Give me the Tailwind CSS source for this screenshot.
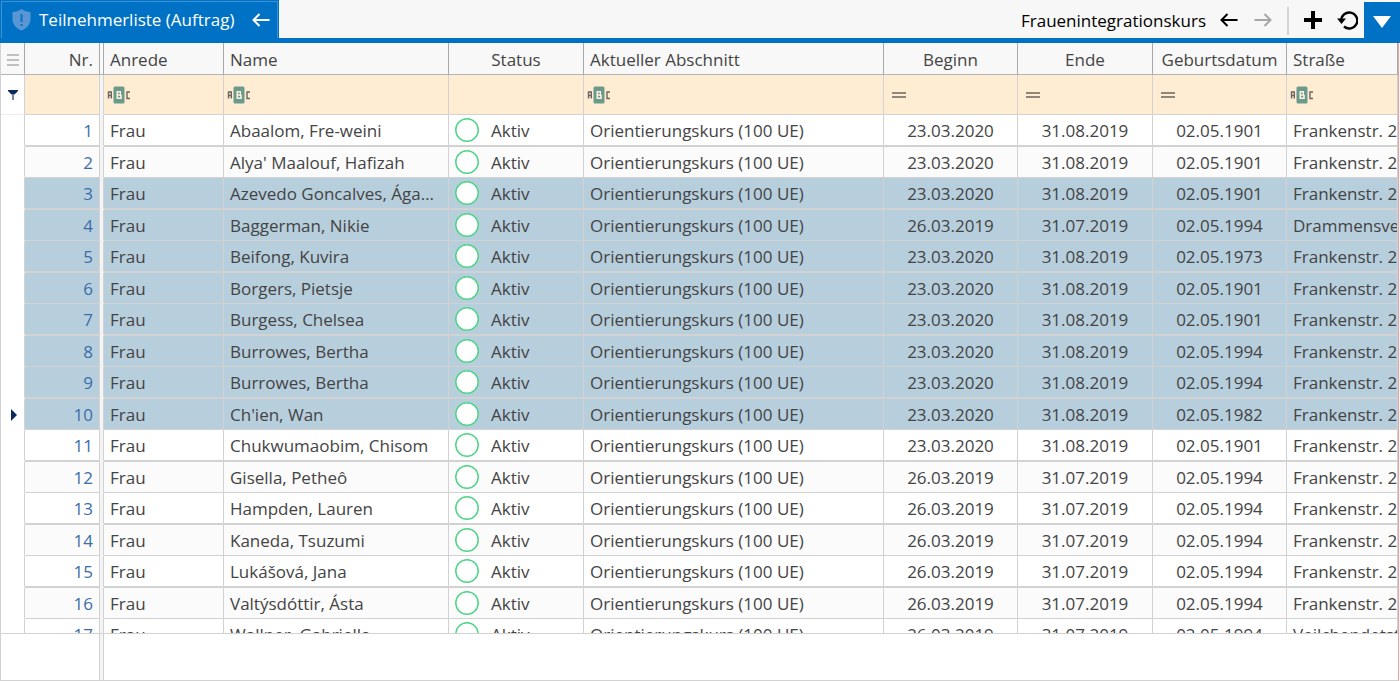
<!DOCTYPE html>
<html lang="de">

<head>
    <meta charset="UTF-8">
    <meta name="viewport" content="width=device-width, initial-scale=1.0">
    <title>Teilnehmerliste (Auftrag)</title>
    <script src="https://cdn.jsdelivr.net/npm/@tailwindcss/browser@4"></script>
</head>

<body class="h-screen flex flex-col overflow-hidden bg-white font-['Open_Sans',sans-serif] text-[17px] leading-6 text-[#444444]">
    <!-- icons used more than once -->
    <svg class="hidden">
        <symbol id="abc" viewBox="0 0 24 18">
            <rect x="6.500" y="0.500" width="11" height="17" rx="1.500" fill="#6a9a8b" />
            <path d="M1.500 12.500V6h2.800v6.500M1.500 9.500h2.800" fill="none" stroke="#6b6560" stroke-width="1.400" />
            <path fill-rule="evenodd" d="M9.500 5h4.500v3.500l.8.500V13H9.500zM11 6.500v1.700h1.700V6.500zM11 9.800v1.700h2.200V9.800z" fill="#fff3df" />
            <path d="M23 6h-3v6.500h3" fill="none" stroke="#6b6560" stroke-width="1.400" />
        </symbol>
        <symbol id="equals" viewBox="0 0 14 6">
            <path d="M0 1h14M0 5h14" stroke="#6b6560" stroke-width="1.700" />
        </symbol>
        <symbol id="arrow" viewBox="0 0 18 14">
            <path d="M17.500 7H2M7.500 1L1.500 7l6 6" fill="none" stroke="currentColor" stroke-width="2" />
        </symbol>
        <symbol id="ring" viewBox="0 0 24 24">
            <circle cx="12" cy="12" r="11.200" fill="#ffffff" stroke="#4fd587" stroke-width="1.500" />
        </symbol>
    </svg>

    <header class="flex shrink-0 h-[43px] bg-[#f7f7f7] border-b-5 border-[#0072c6]">
        <div class="flex w-[279px] bg-[#0072c6] pl-px pr-px pt-px text-white">
            <div class="flex flex-1 items-center border-x border-t border-[#3c93d5] pl-[10px] pr-[7px]">
                <svg class="w-[19px] h-[22px] shrink-0" viewBox="0 0 19 22">
                    <path d="M9.500 0C7 2 3.500 3 .5 3v7c0 5.500 4 9.500 9 11.500 5-2 9-6 9-11.500V3c-3 0-6.500-1-9-3z" fill="#5897d3" />
                    <path d="M8.500 5h2v8h-2zM8.500 15h2v2h-2z" fill="#0f6fc4" />
                </svg>
                <h1 class="ml-2 whitespace-nowrap">Teilnehmerliste (Auftrag)</h1>
                <button type="button" class="ml-auto" aria-label="Zurück">
                    <svg class="block w-[18px] h-[14px]"><use href="#arrow" /></svg>
                </button>
            </div>
        </div>
        <nav class="flex flex-1 items-center justify-end text-black">
            <span class="mt-1 mr-[14px] whitespace-nowrap">Frauenintegrationskurs</span>
            <button type="button" class="mt-[2px] mr-4" aria-label="Vorheriger">
                <svg class="block w-[18px] h-[14px]"><use href="#arrow" /></svg>
            </button>
            <button type="button" class="mt-[2px] mr-[15px] text-[#a6a6a6]" aria-label="Nächster">
                <svg class="block w-[18px] h-[14px] rotate-180"><use href="#arrow" /></svg>
            </button>
            <span class="mt-1 mr-[15px] w-[2px] h-7 bg-[#d4d4d4]"></span>
            <button type="button" class="mt-[2px] mr-[15px]" aria-label="Hinzufügen">
                <svg class="block w-[18px] h-[18px]" viewBox="0 0 18 18">
                    <path d="M9 0v18M0 9h18" stroke="currentColor" stroke-width="4" />
                </svg>
            </button>
            <button type="button" class="mt-[2px] mr-[6px]" aria-label="Aktualisieren">
                <svg class="block w-[21px] h-[19px]" viewBox="0 0 21 19">
                    <path d="M4.300 10A8 8 0 1 1 7 15.500" fill="none" stroke="currentColor" stroke-width="2.400" />
                    <path d="M0 7.500h9l-4.500 5.500z" fill="currentColor" />
                </svg>
            </button>
            <button type="button" class="flex self-stretch mt-[2px] w-9 items-center justify-center bg-[#0072c6] pt-1 text-white" aria-label="Menü">
                <svg class="w-[18px] h-3" viewBox="0 0 18 12"><path d="M0 0h18l-9 12z" fill="currentColor" /></svg>
            </button>
        </nav>
    </header>

    <main class="flex flex-1 flex-col min-h-0 mr-px border-l border-b border-[#d2d2d2] border-r-1 border-r-[#f79a9a]">
        <div class="flex-1 min-h-0 overflow-hidden">
            <table class="w-full table-fixed border-separate border-spacing-0 whitespace-nowrap">
                <colgroup>
                    <col class="w-6">
                    <col class="w-[75px]">
                    <col class="w-1">
                    <col class="w-[120px]">
                    <col class="w-[225px]">
                    <col class="w-[135px]">
                    <col class="w-[300px]">
                    <col class="w-[134px]">
                    <col class="w-[135px]">
                    <col class="w-[134px]">
                    <col>
                </colgroup>
                <thead>
                    <tr class="h-8 bg-[#f8f8f8] *:p-0 *:pt-[2px] *:font-normal *:border-b *:border-r *:border-b-[#b4b4b4] *:border-r-[#a9a9a9]">
                        <th>
                            <button type="button" class="block mx-auto" aria-label="Spalten">
                                <svg class="block w-3 h-3" viewBox="0 0 12 12"><path d="M0 1h12M0 6h12M0 11h12" stroke="#c0c0c0" stroke-width="2" /></svg>
                            </button>
                        </th>
                        <th class="text-right"><span class="pr-[6px]">Nr.</span></th>
                        <th></th>
                        <th class="text-left"><span class="pl-[6px]">Anrede</span></th>
                        <th class="text-left"><span class="pl-[6px]">Name</span></th>
                        <th>Status</th>
                        <th class="text-left"><span class="pl-[6px]">Aktueller Abschnitt</span></th>
                        <th>Beginn</th>
                        <th>Ende</th>
                        <th>Geburtsdatum</th>
                        <th class="text-left"><span class="pl-[6px]">Straße</span></th>
                    </tr>
                    <tr class="h-10 bg-[#feecd3] *:p-0 *:border-b *:border-r *:border-[#d2d2d2]">
                        <td class="bg-white border-b-[#eeeeee]!">
                            <svg class="block mx-auto w-[10px] h-[10px]" viewBox="0 0 10 10">
                                <path d="M0 0h10v1L6.500 4.500h-3L0 1z" fill="#0b2a63" />
                                <path d="M4 4h2v6H4z" fill="#7386ab" />
                            </svg>
                        </td>
                        <td></td>
                        <td class="bg-[#f4f4f4] border-b-[#f4f4f4]!"></td>
                        <td><svg class="ml-[3px] w-6 h-[18px]"><use href="#abc" /></svg></td>
                        <td><svg class="ml-[3px] w-6 h-[18px]"><use href="#abc" /></svg></td>
                        <td></td>
                        <td><svg class="ml-[3px] w-6 h-[18px]"><use href="#abc" /></svg></td>
                        <td><svg class="ml-2 w-[14px] h-[6px]"><use href="#equals" /></svg></td>
                        <td><svg class="ml-2 w-[14px] h-[6px]"><use href="#equals" /></svg></td>
                        <td><svg class="ml-2 w-[14px] h-[6px]"><use href="#equals" /></svg></td>
                        <td><svg class="ml-[3px] w-6 h-[18px]"><use href="#abc" /></svg></td>
                    </tr>
                </thead>
                <tbody id="rows"></tbody>
            </table>
        </div>
        <footer class="flex shrink-0 h-[47px] border-t border-[#d2d2d2]">
            <div class="w-[99px] border-r border-[#d2d2d2]"></div>
            <div class="w-1 border-r border-[#d2d2d2] bg-[#f4f4f4]"></div>
        </footer>
    </main>

    <script>
        const people = [
            ['Abaalom, Fre-weini', '23.03.2020', '31.08.2019', '02.05.1901'],
            ["Alya' Maalouf, Hafizah", '23.03.2020', '31.08.2019', '02.05.1901'],
            ['Azevedo Goncalves, Ágata Maria', '23.03.2020', '31.08.2019', '02.05.1901'],
            ['Baggerman, Nikie', '26.03.2019', '31.07.2019', '02.05.1994', 'Drammensveien 4'],
            ['Beifong, Kuvira', '23.03.2020', '31.08.2019', '02.05.1973'],
            ['Borgers, Pietsje', '23.03.2020', '31.08.2019', '02.05.1901'],
            ['Burgess, Chelsea', '23.03.2020', '31.08.2019', '02.05.1901'],
            ['Burrowes, Bertha', '23.03.2020', '31.08.2019', '02.05.1994'],
            ['Burrowes, Bertha', '23.03.2020', '31.08.2019', '02.05.1994'],
            ["Ch'ien, Wan", '23.03.2020', '31.08.2019', '02.05.1982'],
            ['Chukwumaobim, Chisom', '23.03.2020', '31.08.2019', '02.05.1901'],
            ['Gisella, Petheô', '26.03.2019', '31.07.2019', '02.05.1994'],
            ['Hampden, Lauren', '26.03.2019', '31.07.2019', '02.05.1994'],
            ['Kaneda, Tsuzumi', '26.03.2019', '31.07.2019', '02.05.1994'],
            ['Lukášová, Jana', '26.03.2019', '31.07.2019', '02.05.1994'],
            ['Valtýsdóttir, Ásta', '26.03.2019', '31.07.2019', '02.05.1994'],
            ['Wallner, Gabriella', '26.03.2019', '31.07.2019', '02.05.1994', 'Veilchendetstr. 1'],
        ];
        const current = 10;

        document.getElementById('rows').innerHTML = people.map(([name, start, end, birth, street = 'Frankenstr. 21'], i) => {
            const nr = i + 1;
            const selected = nr >= 3 && nr <= 10;
            const color = selected ? 'bg-[#b7cedd]' : nr % 2 ? 'bg-white' : 'bg-[#fbfbfb]';
            // odd rows carry the thicker rule
            const size = nr % 2 ? 'h-8 *:border-b-2' : 'h-[31px] *:border-b';
            return `
                <tr class="${size} ${color} *:p-0 *:pt-[2px] *:border-r *:border-[#d2d2d2]">
                    <td class="bg-white border-b-white!">${nr === current ? '<svg class="block ml-[10px] w-[6px] h-3" viewBox="0 0 6 12"><path d="M0 0l6 6-6 6z" fill="#0b2a63" /></svg>' : ''}</td>
                    <td class="text-right text-[#3a6ea8]"><span class="pr-[6px]">${nr}</span></td>
                    <td class="bg-[#f4f4f4] border-b-[#f4f4f4]!"></td>
                    <td><span class="pl-[6px]">Frau</span></td>
                    <td><div class="pl-[6px] pr-3 truncate">${name}</div></td>
                    <td><div class="flex items-center gap-3 pl-[6px]"><svg class="-mt-[2px] size-6"><use href="#ring" /></svg>Aktiv</div></td>
                    <td><span class="pl-[6px]">Orientierungskurs (100 UE)</span></td>
                    <td class="text-center">${start}</td>
                    <td class="text-center">${end}</td>
                    <td class="text-center">${birth}</td>
                    <td class="overflow-hidden"><span class="pl-[6px]">${street}</span></td>
                </tr>`;
        }).join('');
    </script>
</body>

</html>
